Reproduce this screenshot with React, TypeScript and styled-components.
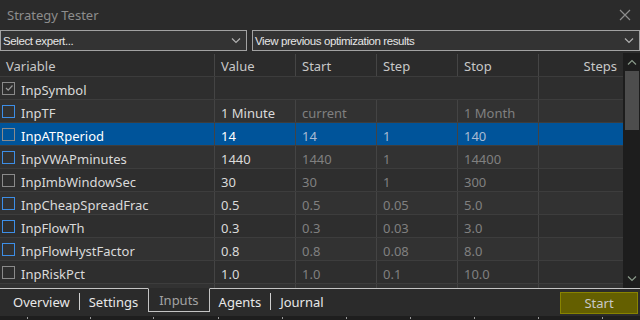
import React from "react";
import styled, { createGlobalStyle } from "styled-components";

type Param = {
    name: string;
    value: string;
    start?: string;
    step?: string;
    stop?: string;
    box: "blue" | "gray" | "checked" | "none";
    merged?: boolean;
};

const params: Param[] = [
    { name: "InpSymbol", value: "", box: "checked", merged: true },
    { name: "InpTF", value: "1 Minute", start: "current", step: "", stop: "1 Month", box: "blue" },
    { name: "InpATRperiod", value: "14", start: "14", step: "1", stop: "140", box: "gray" },
    { name: "InpVWAPminutes", value: "1440", start: "1440", step: "1", stop: "14400", box: "blue" },
    { name: "InpImbWindowSec", value: "30", start: "30", step: "1", stop: "300", box: "gray" },
    { name: "InpCheapSpreadFrac", value: "0.5", start: "0.5", step: "0.05", stop: "5.0", box: "blue" },
    { name: "InpFlowTh", value: "0.3", start: "0.3", step: "0.03", stop: "3.0", box: "blue" },
    { name: "InpFlowHystFactor", value: "0.8", start: "0.8", step: "0.08", stop: "8.0", box: "blue" },
    { name: "InpRiskPct", value: "1.0", start: "1.0", step: "0.1", stop: "10.0", box: "gray" },
    // only the top edge of the next row peeks out above the tabs
    { name: "", value: "", start: "", step: "", stop: "", box: "none" },
];

const SELECTED = 2;
const tabs = ["Overview", "Settings", "Inputs", "Agents", "Journal"];
const ticks = [27, 90, 153, 218, 282, 346, 410, 474, 538, 602];

const Chevron = ({ up }: { up?: boolean }) => (
    <svg width="10" height="6" viewBox="0 0 10 6">
        <path
            d={up ? "M1 5.5 L5 1.5 L9 5.5" : "M1 0.5 L5 4.5 L9 0.5"}
            fill="none"
            stroke="currentColor"
            strokeWidth="1.2"
        />
    </svg>
);

const App = () => {
    return (
        <Window>
            <GlobalStyle />
            <TitleBar>
                <Title>Strategy Tester</Title>
                <svg width="12" height="12" viewBox="0 0 12 12">
                    <path d="M1 1 L11 11 M11 1 L1 11" stroke="#8c8c8c" strokeWidth="1.2" />
                </svg>
            </TitleBar>

            <SelectRow>
                <Select $width={247}>
                    <span>Select expert...</span>
                    <Chevron />
                </Select>
                <Select>
                    <span>View previous optimization results</span>
                    <Chevron />
                </Select>
            </SelectRow>

            <GridArea>
                <Table>
                    <HeaderRow>
                        <HeadCell>Variable</HeadCell>
                        <HeadCell $sep>Value</HeadCell>
                        <HeadCell $sep>Start</HeadCell>
                        <HeadCell $sep>Step</HeadCell>
                        <HeadCell $sep>Stop</HeadCell>
                        <HeadCell $sep $right>Steps</HeadCell>
                    </HeaderRow>
                    {params.map((p, i) => (
                        <Row key={i} $selected={i === SELECTED} $odd={i % 2 === 1}>
                            <NameCell>
                                {p.box !== "none" && (
                                    <CheckBox $kind={p.box}>
                                        {p.box === "checked" && (
                                            <svg width="10" height="10" viewBox="0 0 10 10">
                                                <path d="M2 5 L4.2 7.2 L8.5 2.5" fill="none" stroke="#9a9a9a" strokeWidth="1.2" />
                                            </svg>
                                        )}
                                    </CheckBox>
                                )}
                                {p.name && <span>{p.name}</span>}
                            </NameCell>
                            {p.merged ? (
                                <Cell $span={4} />
                            ) : (
                                <>
                                    <Cell>{p.value}</Cell>
                                    <Cell $dim>{p.start}</Cell>
                                    <Cell $dim>{p.step}</Cell>
                                    <Cell $dim>{p.stop}</Cell>
                                </>
                            )}
                            <Cell />
                        </Row>
                    ))}
                </Table>
                <ScrollBar>
                    <ScrollArrow>
                        <Chevron up />
                    </ScrollArrow>
                    <Thumb />
                    <ScrollSpacer />
                    <ScrollArrow>
                        <Chevron />
                    </ScrollArrow>
                </ScrollBar>
            </GridArea>

            <TabBar>
                <Tabs>
                    {tabs.map((t, i) => (
                        <React.Fragment key={t}>
                            <Tab $active={t === "Inputs"}>{t}</Tab>
                            {i < tabs.length - 1 && t !== "Settings" && t !== "Inputs" && <TabSep />}
                        </React.Fragment>
                    ))}
                </Tabs>
                <StartButton>Start</StartButton>
            </TabBar>
            <BottomStrip>
                {ticks.map((x) => (
                    <Tick key={x} style={{ left: x }} />
                ))}
            </BottomStrip>
        </Window>
    );
};

export default App;

const GlobalStyle = createGlobalStyle`
    body {
        margin: 0;
        background: #2b2b2b;
        font-family: "Noto Sans", "Open Sans", sans-serif;
    }
`;

const Window = styled.div`
    width: 640px;
    height: 320px;
    display: flex;
    flex-direction: column;
    overflow: hidden;
    background: #2b2b2b;
    color: #d4d4d4;
`;

const TitleBar = styled.div`
    height: 30px;
    flex-shrink: 0;
    display: flex;
    align-items: center;
    justify-content: space-between;
    padding: 0 9px 0 7px;
    box-sizing: border-box;
`;

const Title = styled.div`
    font-size: 13px;
    line-height: 16px;
    color: #8d8d8d;
    margin-bottom: 1px;
`;

const SelectRow = styled.div`
    display: flex;
    gap: 5px;
    height: 21px;
    flex-shrink: 0;
    margin-bottom: 2px;
`;

const Select = styled.div<{ $width?: number }>`
    box-sizing: border-box;
    ${(p) => (p.$width ? `width: ${p.$width}px;` : "flex: 1;")}
    height: 21px;
    border: 1px solid #a2a2a2;
    background: #333333;
    display: flex;
    align-items: center;
    justify-content: space-between;
    padding: 0 5px 0 2px;
    font-family: "Liberation Sans", Arial, sans-serif;
    font-size: 11.5px;
    letter-spacing: -0.4px;
    color: #e6e6e6;
    svg {
        color: #b0b0b0;
    }
`;

const GridArea = styled.div`
    display: flex;
    height: 235px;
    flex-shrink: 0;
    overflow: hidden;
`;

const Table = styled.div`
    flex: 1;
    display: flex;
    flex-direction: column;
`;

const columns = "214px 81px 81px 81px 81px 1fr";

const HeaderRow = styled.div`
    display: grid;
    grid-template-columns: ${columns};
    height: 24px;
    flex-shrink: 0;
    background: #2b2b2b;
    border-bottom: 1px solid #3c3c3c;
    box-sizing: border-box;
`;

const HeadCell = styled.div<{ $sep?: boolean; $right?: boolean }>`
    display: flex;
    align-items: center;
    justify-content: ${(p) => (p.$right ? "flex-end" : "flex-start")};
    padding: 2px 6px 0;
    font-size: 13px;
    color: #c8c8c8;
    border-left: ${(p) => (p.$sep ? "1px solid #454545" : "none")};
    margin-top: 1px;
`;

const Row = styled.div<{ $selected: boolean; $odd: boolean }>`
    display: grid;
    grid-template-columns: ${columns};
    height: 23px;
    flex-shrink: 0;
    box-sizing: border-box;
    border-bottom: 1px solid #3d3d3d;
    background: ${(p) => (p.$selected ? "#00549a" : p.$odd ? "#323232" : "#2e2e2e")};
    color: ${(p) => (p.$selected ? "#ffffff" : "#dadada")};
    --dim: ${(p) => (p.$selected ? "#a9bcd4" : "#808080")};
`;

const NameCell = styled.div`
    display: flex;
    align-items: center;
    gap: 6px;
    padding-left: 2px;
    font-size: 13px;
    white-space: nowrap;
    span {
        padding-top: 3px;
    }
`;

const Cell = styled.div<{ $dim?: boolean; $span?: number }>`
    display: flex;
    align-items: center;
    padding: 3px 6px 0;
    font-size: 13px;
    white-space: nowrap;
    border-left: 1px solid #444444;
    color: ${(p) => (p.$dim ? "var(--dim)" : "inherit")};
    ${(p) => (p.$span ? `grid-column: span ${p.$span};` : "")}
`;

const CheckBox = styled.div<{ $kind: "blue" | "gray" | "checked" }>`
    box-sizing: border-box;
    width: 13px;
    height: 13px;
    flex-shrink: 0;
    border: 1px solid ${(p) => (p.$kind === "blue" ? "#3d8ee6" : "#8a8a8a")};
    display: flex;
    align-items: center;
    justify-content: center;
`;

const ScrollBar = styled.div`
    width: 17px;
    flex-shrink: 0;
    background: #1d1d1d;
    display: flex;
    flex-direction: column;
    align-items: center;
    height: 235px;
`;

const ScrollArrow = styled.div`
    height: 18px;
    display: flex;
    align-items: center;
    justify-content: center;
    color: #8a9a8a;
`;

const Thumb = styled.div`
    width: 14px;
    height: 59px;
    background: #4d4d4d;
`;

const ScrollSpacer = styled.div`
    flex: 1;
`;

const TabBar = styled.div`
    height: 28px;
    flex-shrink: 0;
    display: flex;
    align-items: flex-start;
    position: relative;
`;

const Tabs = styled.div`
    flex: 1;
    display: flex;
    align-items: flex-start;
    padding-left: 4px;
    border-top: 1px solid #c4c4c4;
    height: 100%;
    box-sizing: border-box;
`;

const Tab = styled.div<{ $active: boolean }>`
    box-sizing: border-box;
    height: 24px;
    display: flex;
    align-items: center;
    padding: 1px 9px 0;
    font-size: 13px;
    line-height: 18px;
    white-space: nowrap;
    color: ${(p) => (p.$active ? "#a3a3a3" : "#e8e8e8")};
    ${(p) =>
        p.$active
            ? `
        margin: -1px 0 0 1px;
        border: 1px solid #c4c4c4;
        border-top: 1px solid #2b2b2b;
        padding: 0 10px;
    `
            : ""}
`;

const TabSep = styled.div`
    width: 1px;
    height: 17px;
    margin-top: 4px;
    background: #d0d0d0;
`;

const StartButton = styled.div`
    width: 78px;
    height: 22px;
    box-sizing: border-box;
    background: #645f00;
    border: 1px solid #888300;
    color: #c8c8c8;
    font-size: 13px;
    line-height: 16px;
    display: flex;
    align-items: center;
    justify-content: center;
    position: absolute;
    right: 2px;
    top: 4px;
`;

const BottomStrip = styled.div`
    flex: 1;
    background: #1e1e1e;
    position: relative;
`;

const Tick = styled.div`
    position: absolute;
    top: 1px;
    width: 1px;
    height: 2px;
    background: #9a9a9a;
`;
